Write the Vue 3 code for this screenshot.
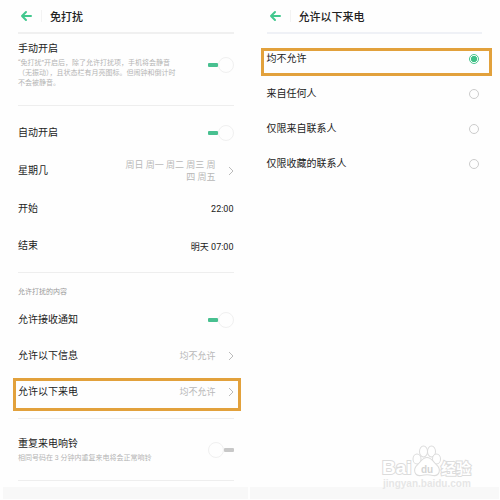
<template>
  <main class="screens">
    <section class="panel">
      <header class="header">
        <button class="back" type="button" aria-label="返回">
          <svg viewBox="0 0 12 12"><path d="M11 6H2M6 2L2 6l4 4" /></svg>
        </button>
        <h1 class="title">免打扰</h1>
      </header>

      <div class="group group-manual">
        <div class="row-text">
          <label class="name" for="manual">手动开启</label>
          <p class="hint">“免打扰”开启后，除了允许打扰项，手机将会静音<br>（无振动），且状态栏有月亮图标。但闹钟和倒计时<br>不会被静音。</p>
        </div>
        <input id="manual" v-model="manual" class="switch" type="checkbox">
      </div>

      <div class="group group-auto">
        <div class="row">
          <label class="name" for="auto">自动开启</label>
          <input id="auto" v-model="auto" class="switch" type="checkbox">
        </div>
        <button class="row" type="button">
          <span class="name">星期几</span>
          <span class="value">周日 周一 周二 周三 周<br>四 周五</span>
          <svg class="chevron" viewBox="0 0 6 10"><path d="M1 1l4 4-4 4" /></svg>
        </button>
        <button v-for="item in times" :key="item.name" class="row" type="button">
          <span class="name">{{ item.name }}</span>
          <span class="time">{{ item.value }}</span>
        </button>
      </div>

      <div class="group group-allow">
        <h2 class="caption">允许打扰的内容</h2>
        <div class="row">
          <label class="name" for="notify">允许接收通知</label>
          <input id="notify" v-model="notify" class="switch" type="checkbox">
        </div>
        <button
          v-for="item in allowed"
          :key="item.name"
          class="row"
          :class="{ marked: item.marked }"
          type="button"
        >
          <span class="name">{{ item.name }}</span>
          <span class="value">均不允许</span>
          <svg class="chevron" viewBox="0 0 6 10"><path d="M1 1l4 4-4 4" /></svg>
        </button>
      </div>

      <div class="group group-repeat">
        <div class="row-text">
          <label class="name" for="repeat">重复来电响铃</label>
          <p class="hint">相同号码在 3 分钟内重复来电将会正常响铃</p>
        </div>
        <input id="repeat" v-model="repeat" class="switch" type="checkbox">
      </div>

      <div class="navbar"></div>
    </section>

    <section class="panel panel-calls">
      <header class="header">
        <button class="back" type="button" aria-label="返回">
          <svg viewBox="0 0 12 12"><path d="M11 6H2M6 2L2 6l4 4" /></svg>
        </button>
        <h1 class="title">允许以下来电</h1>
      </header>

      <div class="options">
        <label
          v-for="option in options"
          :key="option"
          class="option"
          :class="{ marked: option === '均不允许' }"
        >
          <span class="name">{{ option }}</span>
          <input v-model="selected" class="radio" type="radio" name="calls" :value="option">
        </label>
      </div>

      <div class="navbar"></div>

      <svg class="watermark" viewBox="0 0 94 46">
        <g class="outline">
          <text class="logo" x="2" y="29">Bai</text>
          <text class="cn" x="61" y="29">经验</text>
          <ellipse cx="37" cy="14" rx="3.5" ry="4.5" />
          <ellipse cx="43.5" cy="6.5" rx="3.5" ry="5" />
          <ellipse cx="51.5" cy="6.5" rx="3.5" ry="5" />
          <ellipse cx="56.5" cy="14" rx="3.5" ry="4.5" />
          <path d="M47 13c-4 0-6 4-9 7-5 4-3 11 3 10 4-1 8-1 12 0 6 1 8-6 3-10-3-3-5-7-9-7z" />
        </g>
        <text class="du" x="41" y="28">du</text>
        <text class="url" x="3" y="42">jingyan.baidu.com</text>
      </svg>
    </section>
  </main>
</template>

<script setup>
import { ref } from 'vue';

const manual = ref(true);
const auto = ref(true);
const notify = ref(true);
const repeat = ref(false);

const times = [
  { name: '开始', value: '22:00' },
  { name: '结束', value: '明天 07:00' },
];

const allowed = [
  { name: '允许以下信息', marked: false },
  { name: '允许以下来电', marked: true },
];

const options = ['均不允许', '来自任何人', '仅限来自联系人', '仅限收藏的联系人'];
const selected = ref('均不允许');
</script>

<style>
body {
  background: #fefefe;
}
</style>

<style scoped>
.screens {
  display: flex;
  font-family: Roboto, "Noto Sans CJK SC", sans-serif;
  font-size: 10px;
  color: #222;
}

.panel {
  position: relative;
  flex: 1;
  display: flex;
  flex-direction: column;
  padding: 0 16px 2px 18px;
}

.panel-calls {
  padding: 0 18px 2px 17px;
}

button {
  font: inherit;
  color: inherit;
  text-align: left;
  background: none;
  border: none;
  padding: 0;
  cursor: pointer;
}

/* ===== HEADER ===== */
.header {
  display: flex;
  align-items: center;
  height: 32px;
  border-bottom: 2px solid #f0f0f0;
}

.panel-calls .header {
  border-color: #eff1f6;
}

.back {
  display: flex;
  padding: 0 9px 0 2px;
  border-right: 1px solid #f3f3f3;
}

.back svg {
  width: 12px;
  height: 12px;
  fill: none;
  stroke: #42c88e;
  stroke-width: 2;
  stroke-linecap: round;
  stroke-linejoin: round;
}

.title {
  margin: 0 0 0 8px;
  font-size: 11px;
  font-weight: 500;
}

/* ===== ROWS ===== */
.group {
  border-bottom: 1px solid #eee;
}

.group-manual,
.group-repeat {
  display: flex;
  align-items: center;
  justify-content: space-between;
}

.group-manual {
  padding: 8px 0 17px;
}

.group-auto {
  padding: 8px 0;
}

.group-auto .row {
  height: 38px;
}

.group-auto .row:last-child {
  height: 36px;
}

.group-allow {
  padding: 14px 0 8px;
}

.group-repeat {
  height: 60px;
  padding-top: 1px;
}

.row {
  position: relative;
  display: flex;
  align-items: center;
  width: 100%;
  height: 36px;
}

.name {
  flex: 1;
  line-height: 14px;
}

.row-text {
  display: flex;
  flex-direction: column;
  gap: 2px;
}

.hint {
  margin: 0;
  font-size: 7px;
  line-height: 10px;
  color: #b4b4b4;
  white-space: nowrap;
}

.caption {
  margin: 0 0 5px;
  font-size: 7px;
  font-weight: 400;
  line-height: 10px;
  color: #999;
}

.value {
  font-size: 9px;
  line-height: 12px;
  color: #b8b8b8;
  text-align: right;
}

.time {
  font-size: 9px;
}

.chevron {
  width: 6px;
  height: 10px;
  margin-left: 12px;
  fill: none;
  stroke: #bbb;
  stroke-width: 1;
}

/* ===== SWITCH ===== */
.switch {
  appearance: none;
  display: flex;
  align-items: center;
  flex-direction: row-reverse;
  width: 26px;
  height: 16px;
  margin: 0;
}

.switch::before {
  content: '';
  width: 10px;
  height: 4px;
  border-radius: 1px;
  background: #c8c8c8;
}

.switch::after {
  content: '';
  box-sizing: border-box;
  width: 16px;
  height: 16px;
  border: 1px solid #f0f0f0;
  border-radius: 50%;
}

.switch:checked {
  flex-direction: row;
}

.switch:checked::before {
  background: #48c090;
}

/* ===== OPTIONS ===== */
.options {
  padding-top: 7px;
}

.option {
  position: relative;
  display: flex;
  align-items: center;
  height: 35px;
  padding-right: 3px;
}

.radio {
  appearance: none;
  box-sizing: border-box;
  width: 10px;
  height: 10px;
  margin: 0;
  border: 1px solid #ccc;
  border-radius: 50%;
}

.radio:checked {
  border-color: #48c48e;
  background: radial-gradient(circle, #3fc187 50%, #fff 60%);
}

/* ===== HIGHLIGHT FRAME ===== */
.marked::after {
  content: '';
  position: absolute;
  border: 3px solid #e2a13c;
  pointer-events: none;
}

.row.marked::after {
  inset: 4px -7px -1px -5px;
}

.option.marked::after {
  inset: 7px -10px 0 -6px;
}

/* ===== BOTTOM ===== */
.navbar {
  height: 12px;
  margin: 6px -14px 0 -15px;
  background: #f8f8f8;
}

.panel-calls .navbar {
  margin: auto -17px 0;
}

.watermark {
  position: absolute;
  right: 26px;
  bottom: 10px;
  width: 94px;
  height: 46px;
  font-family: "Liberation Sans", "Noto Sans CJK SC", sans-serif;
  font-weight: 700;
}

.outline {
  fill: #fff;
  stroke: #dcdcdc;
  stroke-width: 2;
  paint-order: stroke;
}

.logo {
  font-size: 19px;
}

.du {
  font-size: 10px;
  fill: #d4d4d4;
}

.cn {
  font-size: 15px;
}

.url {
  font-size: 10px;
  fill: #e6e6e6;
}
</style>
